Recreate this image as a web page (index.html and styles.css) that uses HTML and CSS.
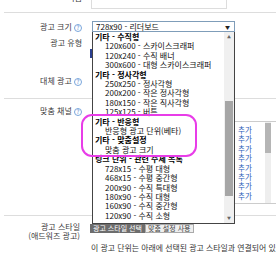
FILE: index.html
```html
<!DOCTYPE html>
<html lang="ko">
<head>
    <meta charset="UTF-8">
    <title>광고 단위</title>
    <link rel="stylesheet" href="styles.css">
</head>
<body>

    <div class="section top">
        <div class="row">
            <div class="label">이름</div>
            <div class="field"><div class="textbox"></div></div>
        </div>
    </div>

    <div class="section format">
        <div class="row size">
            <div class="label">광고 크기 <i class="help">?</i></div>
            <div class="field">
                <div class="select-wrap">
                    <div class="select">728x90 - 리더보드 <span class="arrow">▼</span></div>
                    <div class="dropdown">
                        <ul class="options">
                            <li class="group">기타 - 수직형</li>
                            <li>120x600 - 스카이스크래퍼</li>
                            <li>120x240 - 수직 배너</li>
                            <li>300x600 - 대형 스카이스크래퍼</li>
                            <li class="group">기타 - 정사각형</li>
                            <li>250x250 - 정사각형</li>
                            <li>200x200 - 작은 정사각형</li>
                            <li>180x150 - 작은 직사각형</li>
                            <li>125x125 - 버튼</li>
                            <li class="group">기타 - 반응형</li>
                            <li>반응형 광고 단위(베타)</li>
                            <li class="group">기타 - 맞춤설정</li>
                            <li>맞춤 광고 크기</li>
                            <li class="group">링크 단위 - 관련 주제 목록</li>
                            <li>728x15 - 수평 대형</li>
                            <li>468x15 - 수평 중간형</li>
                            <li>200x90 - 수직 특대형</li>
                            <li>180x90 - 수직 대형</li>
                            <li>160x90 - 수직 중간형</li>
                            <li>120x90 - 수직 소형</li>
                        </ul>
                        <div class="scrollbar">
                            <span class="up">▲</span>
                            <span class="thumb"></span>
                            <span class="down">▼</span>
                        </div>
                        <div class="circle"></div>
                    </div>
                </div>
            </div>
        </div>
        <div class="row type">
            <div class="label">광고 유형</div>
            <div class="field"><span class="mark"></span></div>
        </div>
        <div class="row alt">
            <div class="label">대체 광고 <i class="help">?</i></div>
            <div class="field"></div>
        </div>
    </div>

    <div class="section channel">
        <div class="row">
            <div class="label">맞춤 채널 <i class="help">?</i></div>
            <div class="field">
                <div class="addbox">
                    <ul class="adds">
                        <li>추가</li>
                        <li>추가</li>
                        <li>추가</li>
                        <li>추가</li>
                        <li>추가</li>
                        <li>추가</li>
                        <li>추가</li>
                        <li>추가</li>
                    </ul>
                    <div class="addscroll"><span class="addthumb"></span></div>
                </div>
            </div>
        </div>
    </div>

    <div class="section style">
        <div class="row">
            <div class="label">광고 스타일<br>(애드워즈 광고)</div>
            <div class="field">
                <div class="tabs">
                    <span class="tab on">광고 스타일 선택</span>
                    <span class="tab">맞춤 설정 사용</span>
                </div>
                <p class="note">이 광고 단위는 아래에 선택된 광고 스타일과 연결되어 있습니다.</p>
            </div>
        </div>
    </div>

</body>
</html>
```

FILE: styles.css
```css
body{
    margin: 0;
    width: 276px;
    height: 260px;
    overflow: hidden;
    background: #fff;
    font-family: "Noto Sans CJK KR", "Noto Sans", sans-serif;
    font-size: 8px;
    color: #3a3a3a;
}
.section{
    margin-left: 4px;
    border-top: 1px solid #ddd;
}
.row{
    display: flex;
}
.label{
    width: 78px;
    flex: none;
    text-align: right;
    line-height: 10px;
    white-space: nowrap;
}
.field{
    margin-left: 10px;
    flex: 1;
    min-width: 0;
}
.help{
    display: inline-block;
    width: 6px;
    height: 6px;
    border: 1px solid #79a6dc;
    border-radius: 50%;
    font-style: normal;
    font-size: 6px;
    line-height: 6px;
    text-align: center;
    color: #3c7bcc;
}

/* 이름 (위쪽 잘림) */
.top{
    border-top: 0;
    height: 19px;
}
.top .row{
    margin-top: -7px;
}
.top .field{
    margin-left: 9px;
}
.textbox{
    width: 134px;
    height: 25px;
    margin-top: -10px;
    border: 1px solid #ddd;
    border-top: 0;
}

/* 광고 크기 */
.format{
    padding-top: 8px;
    padding-bottom: 12px;
}
.size .label{
    line-height: 11px;
}
.select-wrap{
    position: relative;
    width: 143px;
}
.select{
    height: 11px;
    box-sizing: border-box;
    border: 1px solid #7f9db9;
    background: #fff;
    color: #111;
    line-height: 9px;
    padding-left: 3px;
    position: relative;
}
.arrow{
    position: absolute;
    right: 4px;
    top: 0;
    font-size: 5px;
    color: #222;
}
.dropdown{
    position: absolute;
    top: 11px;
    left: 0;
    width: 143px;
    height: 192px;
    box-sizing: border-box;
    border: 1px solid #444;
    border-top: 0;
    background: #fff;
    z-index: 5;
    display: flex;
}
.options{
    list-style: none;
    margin: 0;
    padding: 0;
    flex: 1;
    min-width: 0;
    overflow: hidden;
    color: #111;
}
.options li{
    line-height: 9.42px;
    height: 9.42px;
    padding-left: 12px;
    white-space: nowrap;
}
.options .group{
    padding-left: 2px;
    font-weight: bold;
    color: #000;
}
.scrollbar{
    width: 10px;
    background: #f0f0f0;
    position: relative;
    flex: none;
}
.scrollbar .up,
.scrollbar .down{
    position: absolute;
    left: 0;
    width: 10px;
    text-align: center;
    font-size: 4px;
    color: #666;
    line-height: 8px;
}
.scrollbar .up{ top: 1px; }
.scrollbar .down{ bottom: 1px; }
.thumb{
    position: absolute;
    left: 1px;
    right: 1px;
    top: 69px;
    height: 95px;
    background: #a6a6a6;
}
.circle{
    position: absolute;
    left: -12px;
    top: 82px;
    width: 116px;
    height: 43px;
    box-sizing: border-box;
    border: 2.5px solid #e83ce8;
    border-radius: 11px;
}

.type{
    margin-top: 6px;
}
.mark{
    display: block;
    width: 2px;
    height: 9px;
    margin: 11px 0 0 -2px;
    background: #2a3f8f;
}
.alt{
    margin-top: 18px;
}

/* 맞춤 채널 */
.channel{
    padding-top: 7px;
    padding-bottom: 11px;
}
.channel .field{
    display: flex;
    justify-content: flex-end;
    margin-right: -4px;
}
.addbox{
    flex: none;
    margin-top: 15px;
    width: 45px;
    height: 83px;
    box-sizing: border-box;
    border-top: 1px solid #ccc;
    border-bottom: 1px solid #ccc;
    display: flex;
}
.adds{
    list-style: none;
    margin: 0;
    padding: 3px 0 0 3px;
    width: 24px;
    flex: none;
    font-size: 7.5px;
    color: #2a5db8;
    overflow: hidden;
}
.adds li{
    line-height: 9.4px;
}
.addscroll{
    width: 6px;
    margin-left: auto;
    margin-right: 9px;
    background: #eee;
    position: relative;
}
.addthumb{
    position: absolute;
    left: 0;
    right: 0;
    top: 1px;
    height: 30px;
    background: #b5b5b5;
}

/* 광고 스타일 */
.style{
    padding-top: 6px;
}
.style .label{
    line-height: 9px;
    padding-right: 2px;
    width: 76px;
}
.tabs{
    display: flex;
    margin-top: 2px;
    margin-left: -2px;
}
.tab{
    height: 7px;
    line-height: 7px;
    font-size: 7px;
    padding: 0 2px;
    border: 1px solid #aaa;
    background: #eee;
    color: #444;
}
.tab.on{
    background: #6d6d6d;
    border-color: #6d6d6d;
    color: #fff;
}
.note{
    margin: 10px 0 0 -1px;
    font-size: 7.9px;
    line-height: 9px;
    white-space: nowrap;
    overflow: hidden;
    color: #333;
}
```
